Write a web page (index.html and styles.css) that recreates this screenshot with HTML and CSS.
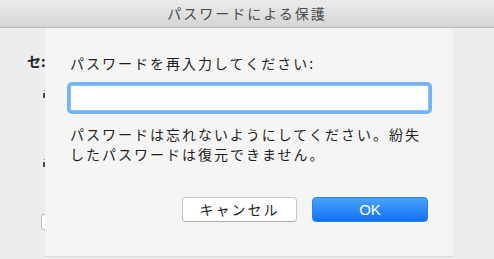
FILE: index.html
```html
<!DOCTYPE html>
<html lang="ja">
<head>
<meta charset="utf-8">
<link rel="stylesheet" href="styles.css">
</head>
<body>
<div class="window">
  <div class="titlebar">パスワードによる保護</div>
  <div class="behind">
    <div class="b-row b-heading">セ:</div>
    <div class="b-mark"><span class="dot"></span><span class="blob"></span></div>
    <div class="b-mark b-mark2"><span class="dot"></span><span class="blob"></span></div>
    <div class="b-check"></div>
  </div>
  <div class="sheet">
    <div class="label">パスワードを再入力してください:</div>
    <input class="field" type="password">
    <p class="note">パスワードは忘れないようにしてください。紛失<br>したパスワードは復元できません。</p>
    <div class="buttons">
      <button class="btn btn-cancel">キャンセル</button>
      <button class="btn btn-ok">OK</button>
    </div>
  </div>
</div>
</body>
</html>
```
FILE: styles.css
```css
html, body {
  margin: 0;
  padding: 0;
}
body {
  width: 494px;
  height: 259px;
  overflow: hidden;
  background: #ececec;
  font-family: "Noto Sans CJK JP", "Noto Sans", sans-serif;
}
.window {
  position: relative;
  width: 494px;
  height: 259px;
  background: #ededed;
}
.titlebar {
  height: 28px;
  box-sizing: border-box;
  border-bottom: 1px solid #b9b9b9;
  background: linear-gradient(#ebebeb, #d5d5d5);
  text-align: center;
  font-size: 14px;
  letter-spacing: 2px;
  line-height: 27px;
  color: #4a4a4a;
}
.behind {
  display: flex;
  flex-direction: column;
  width: 45px;
  box-sizing: border-box;
  overflow: hidden;
  white-space: nowrap;
  padding-left: 27px;
  color: #222;
  font-size: 14px;
}
.b-row {
  height: 20px;
  line-height: 20px;
}
.b-heading {
  margin-top: 23px;
  font-weight: bold;
  letter-spacing: 0;
}
.b-mark {
  display: flex;
  flex-direction: column;
  align-items: flex-start;
  gap: 2px;
  margin-top: 19px;
  margin-left: 16px;
  height: 9px;
}
.b-mark .dot {
  width: 1px;
  height: 1px;
  margin-left: 1px;
  background: #888;
}
.b-mark .blob {
  width: 2px;
  height: 5px;
  border-radius: 1px 0 0 1px;
  background: #444;
}
.b-mark2 {
  margin-top: 60px;
}
.b-check {
  margin-top: 46px;
  margin-left: 14px;
  width: 14px;
  height: 16px;
  box-sizing: border-box;
  border: 1px solid #b8b8b8;
  border-radius: 3px;
  background: #fff;
}
.sheet {
  position: absolute;
  left: 45px;
  top: 28px;
  width: 408px;
  height: 228px;
  box-sizing: border-box;
  background: #f5f5f5;
  padding: 25px 0 0 25px;
  display: flex;
  flex-direction: column;
  color: #1e1e1e;
  font-size: 14px;
  letter-spacing: 2px;
  box-shadow: 0 1px 1px rgba(0,0,0,0.08);
}
.label {
  line-height: 20px;
  height: 20px;
}
.field {
  margin: 12px 0 0 0;
  width: 359px;
  height: 26px;
  box-sizing: border-box;
  border: 1px solid #8cc1f5;
  border-radius: 2px;
  background: #fff;
  outline: none;
  box-shadow: 0 0 0 3px #74b5f6;
  padding: 0 4px;
}
.note {
  margin: 13px 0 0 0;
  line-height: 20px;
}
.buttons {
  display: flex;
  gap: 15px;
  margin-top: 33px;
  margin-left: 112px;
}
.btn {
  width: 115px;
  height: 25px;
  box-sizing: border-box;
  border-radius: 4px;
  font-family: "Noto Sans CJK JP", "Noto Sans", sans-serif;
  font-size: 14px;
  letter-spacing: 2px;
  padding: 0;
  line-height: 23px;
}
.btn-cancel {
  background: #fff;
  border: 1px solid #c6c6c6;
  border-bottom-color: #acacac;
  color: #222;
}
.btn-ok {
  width: 116px;
  background: linear-gradient(#4ba4fd, #1170f5);
  border: 1px solid #2a7ff0;
  color: #fff;
  letter-spacing: 0;
  font-family: "Liberation Sans", Arial, sans-serif;
  font-size: 15px;
}
```
